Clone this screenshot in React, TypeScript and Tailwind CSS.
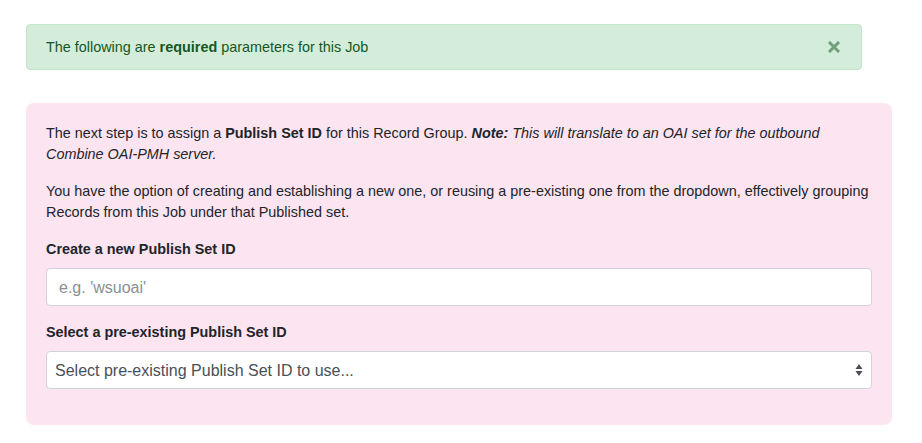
import React from "react";

export default function App() {
  return (
    <div
      className="w-[922px] h-[443px] bg-white text-[14.4px] leading-[21px] text-[#212529]"
      style={{ fontFamily: '"Liberation Sans", Arial, Helvetica, sans-serif' }}
    >
      <div className="pt-[24px] pl-[26px]">
        <div className="w-[836px] h-[46px] flex items-center justify-between rounded-[4px] border border-[#c3e6cb] bg-[#d4edda] px-[19px] text-[#155724]">
          <span>
            The following are <b>required</b> parameters for this Job
          </span>
          <svg width="12" height="12" viewBox="0 0 12 12" className="mr-[2px]">
            <path d="M2 2 L10 10 M10 2 L2 10" stroke="#6f9f7b" strokeWidth="3" strokeLinecap="square" />
          </svg>
        </div>

        <div className="mt-[33px] w-[866px] rounded-[8px] bg-[#fce4f1] p-[20px]">
          <p className="mb-[16px]">
            The next step is to assign a <b>Publish Set ID</b> for this Record Group.{" "}
            <i>
              <b>Note:</b> This will translate to an OAI set for the outbound Combine OAI-PMH server.
            </i>
          </p>
          <p className="mb-[16px]">
            You have the option of creating and establishing a new one, or reusing a pre-existing one from the
            dropdown, effectively grouping Records from this Job under that Published set.
          </p>
          <div className="mb-[16px]">
            <label className="block font-bold mb-[8px]">Create a new Publish Set ID</label>
            <div className="h-[38px] rounded-[4px] border border-[#ced4da] bg-white px-[12px] flex items-center text-[16px] text-[#8a8f94]">
              e.g. 'wsuoai'
            </div>
          </div>
          <div className="mb-[16px]">
            <label className="block font-bold mb-[8px]">Select a pre-existing Publish Set ID</label>
            <div className="h-[38px] rounded-[4px] border border-[#ced4da] bg-white pl-[8px] pr-[8px] flex items-center justify-between text-[16px] text-[#495057]">
              <span>Select pre-existing Publish Set ID to use...</span>
              <svg width="8" height="14" viewBox="0 0 8 14">
                <path d="M4 1 L7.5 6 L0.5 6 Z" fill="#4a4f55" />
                <path d="M0.5 8 L7.5 8 L4 13 Z" fill="#4a4f55" />
              </svg>
            </div>
          </div>
        </div>
      </div>
    </div>
  );
}
